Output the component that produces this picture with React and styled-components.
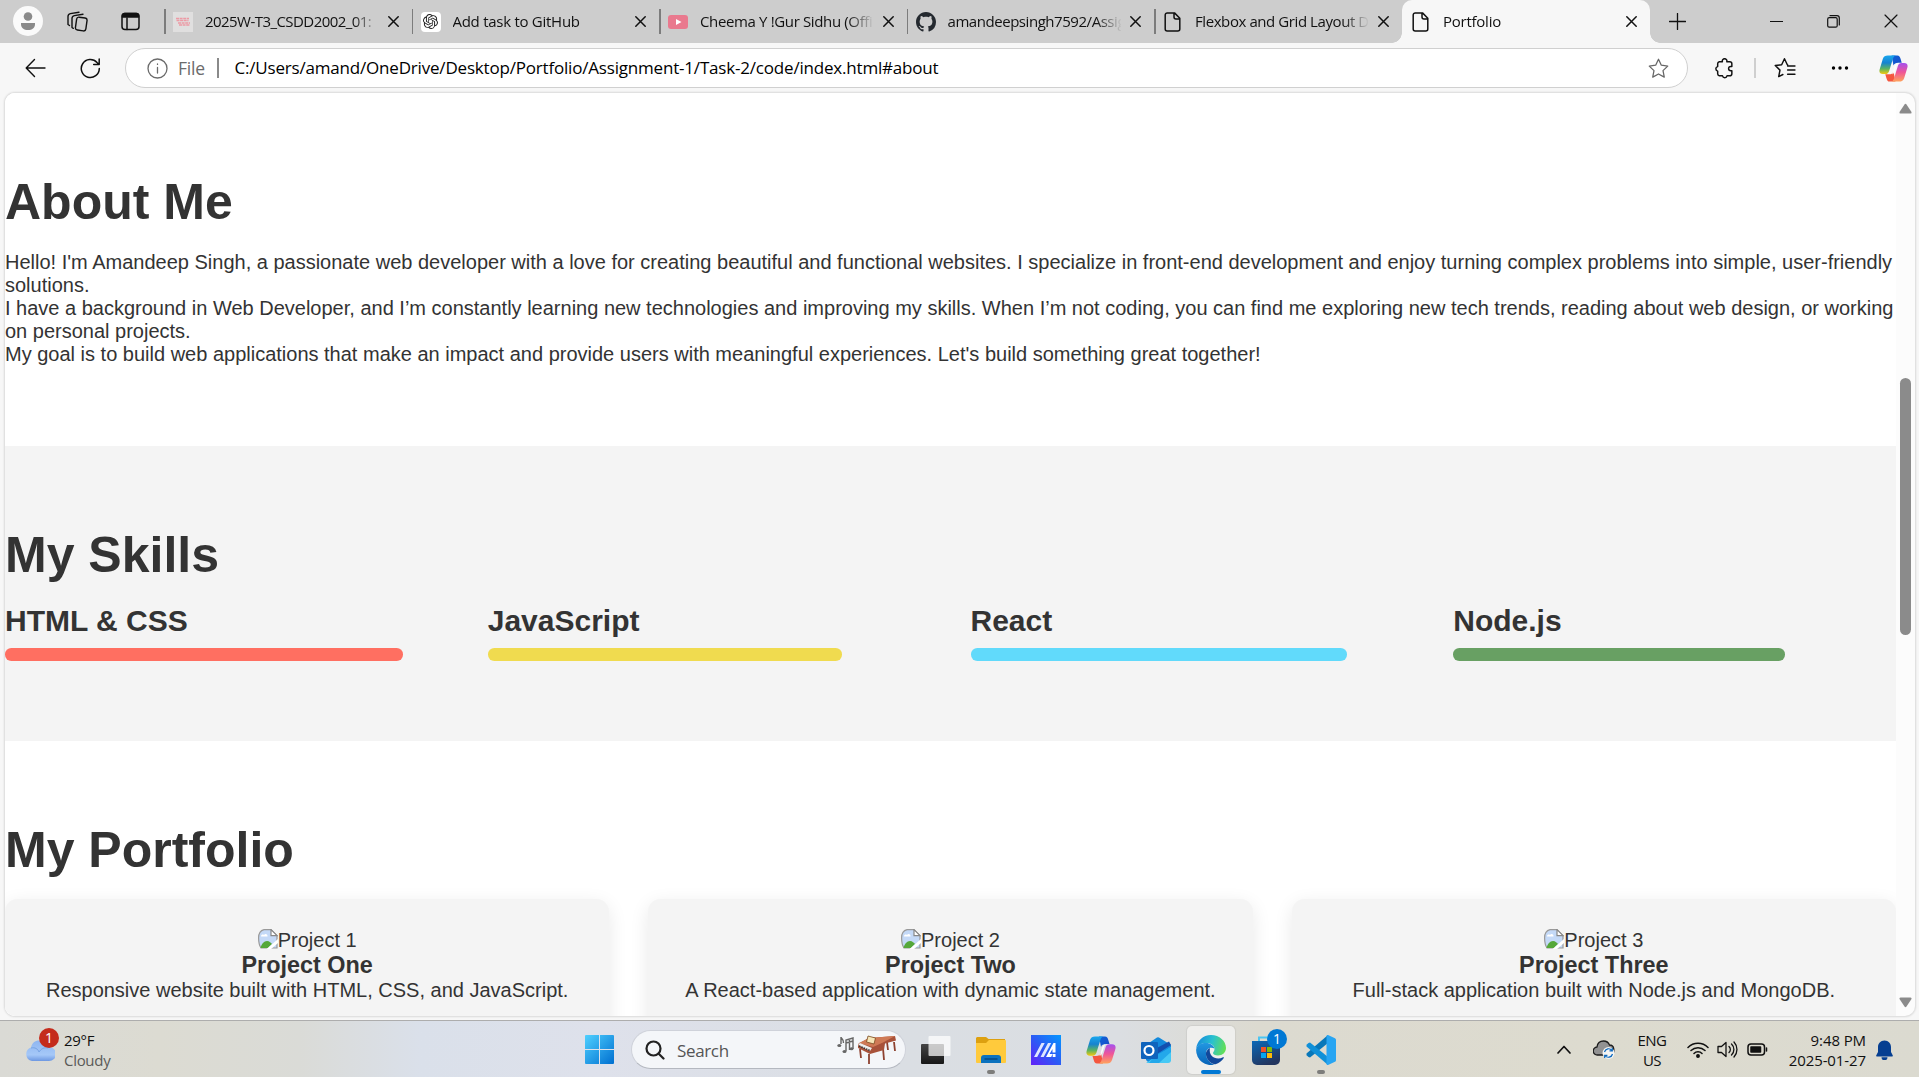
import React from 'react';
import styled, { createGlobalStyle } from 'styled-components';
import { SiOpenai } from 'react-icons/si';

const Global = createGlobalStyle`
  * { box-sizing: border-box; margin: 0; padding: 0; }
  body { background: #f7f7f7; overflow: hidden; }
  svg { display: block; flex: none; }
`;
const ui = `"Open Sans", "Noto Sans", sans-serif`;

const Screen = styled.div`
  width: 1919px; height: 1077px; display: flex; flex-direction: column;
  background: #f7f7f7; overflow: hidden; font-family: ${ui}; color: #111;
`;

/* ---------- tab strip ---------- */
const TabStrip = styled.div`
  height: 43px; flex: none; display: flex; background: #cdcdcd;
`;
const StripTools = styled.div`
  width: 164px; display: flex; align-items: center; padding: 0 0 1px 13px;
`;
const Avatar = styled.div`
  width: 30px; height: 30px; border-radius: 50%; background: #fafafa;
  display: grid; place-items: center; margin-right: 24px;
`;
const TabBox = styled.div`
  width: ${p => p.$w || 247.5}px; height: 43px; display: flex; align-items: center; position: relative;
  padding-left: ${p => (p.$active ? 9 : 8)}px;
  margin-left: ${p => (p.$active ? 0.5 : 0)}px;
  background: ${p => (p.$active ? '#f7f7f7' : 'transparent')};
  border-radius: ${p => (p.$active ? '10px 10px 0 0' : '0')};
  &::before {
    content: ''; display: ${p => (p.$active ? 'none' : 'block')};
    width: 1.5px; height: 25px; background: #7c7c7c; margin-left: -8px; margin-right: 7.5px;
  }
`;
const Foot = styled.i`
  position: absolute; bottom: 0; width: 10px; height: 10px;
  ${p => (p.$right ? 'right: -10px;' : 'left: -10px;')}
  background: radial-gradient(circle at ${p => (p.$right ? '100%' : '0')} 0, transparent 9.5px, #f7f7f7 10px);
`;
const TabTitle = styled.span`
  width: 173px; margin-left: 12px; font-size: 15px; letter-spacing: ${p => p.$ls || 0}px; line-height: 22px;
  white-space: nowrap; padding-bottom: 2px;
  mask-image: linear-gradient(90deg, #000 148px, transparent 174px);
`;
const TabClose = styled.span`width: 24px; display: grid; place-items: center; margin-left: 3px;`;
const NewTab = styled.span`width: 54px; display: grid; place-items: center; padding-bottom: 1px;`;
const WindowButtons = styled.div`
  margin-left: auto; margin-right: -1px; display: flex; align-items: center; padding-bottom: 1px;
  span { width: 57.5px; display: grid; place-items: center; }
`;

/* ---------- toolbar ---------- */
const Toolbar = styled.div`
  height: 50px; flex: none; display: flex; align-items: center; padding-left: 24.5px;
`;
const Address = styled.div`
  width: 1563px; height: 40px; margin-left: 24.5px; border: 1.5px solid #d0d0d0; border-radius: 20px;
  background: #fff; display: flex; align-items: center; padding: 0 18px 0 21px;
`;
const FileLabel = styled.span`font-size: 17.5px; color: #6b6b6b; margin-left: 10px; width: 34px; letter-spacing: -.2px; padding-bottom: 1px;`;
const Divider = styled.i`width: 1.5px; height: 20px; flex: none; background: ${p => p.$c || '#8a8a8a'};`;
const Url = styled.span`
  font-size: 17px; margin-left: 16px; padding-bottom: 2px; letter-spacing: -0.19px; color: #000; flex: 1; white-space: nowrap;
`;
const ToolIcons = styled.div`flex: 1; display: flex; align-items: center; padding-left: 26px;`;

/* ---------- page ---------- */
const Viewport = styled.div`
  width: 1910px; height: 923px; margin-left: 5px; flex: none; display: flex; overflow: hidden;
  border-radius: 10px; background: #fcfcfc; box-shadow: 0 0 2px 1px rgba(0,0,0,.12);
`;
const Page = styled.main`
  width: 1891px; background: #fff; color: #333; overflow: hidden;
  font: 20px/23px "Liberation Sans", Arial, sans-serif;
`;
const Section = styled.section`
  padding: 80px 0; background: ${p => (p.$tinted ? '#f4f4f4' : '#fff')};
`;
const Heading = styled.h1`font-size: 50px; line-height: 57.5px; padding-top: 1px; margin-bottom: 19px; font-weight: 700;`;
const SkillGrid = styled.div`display: grid; grid-template-columns: repeat(4, 1fr); gap: 40px;`;
const SkillName = styled.h3`font-size: 30px; line-height: 35px; margin-bottom: 10px;`;
const Bar = styled.div`height: 12.5px; border-radius: 6.25px; width: ${p => p.$w}%; background: ${p => p.$c};`;
const CardGrid = styled.div`display: grid; grid-template-columns: repeat(3, 1fr); gap: 39px; padding-top: .5px;`;
const Card = styled.article`
  padding: 30.5px; height: 200px; border-radius: 12.5px; background: #f4f4f4; text-align: center;
  box-shadow: 0 5px 19px rgba(0,0,0,.09);
`;
const ImageLine = styled.div`display: flex; justify-content: center; height: 23px;`;
const CardTitle = styled.h3`font-size: 23.4px; line-height: 26.5px;`;
const ScrollTrack = styled.div`
  width: 19px; display: flex; flex-direction: column; align-items: center; padding: 10px 0 8px;
`;
const Thumb = styled.div`width: 11px; height: 257px; border-radius: 6px; background: #8b8b8b; margin: 264px 0 auto;`;

/* ---------- taskbar ---------- */
const Taskbar = styled.footer`
  height: 57px; flex: none; margin-top: 4px; border-top: 1px solid #adadad; display: flex; align-items: center; padding-top: 1px;
  background: linear-gradient(90deg, #dadad5 0, #dcdbd2 160px, #dadbd7 300px, #dae0ea 420px, #dee1eb 600px, #dadee3 900px, #dbdee2 1120px, #dcdad0 1260px, #dddbcf 1600px, #dbdad0 100%);
`;
const Weather = styled.div`display: flex; width: 585px; padding-left: 24px; align-items: center;`;
const IconHolder = styled.div`position: relative; width: 32px; height: 32px; display: grid; place-items: center;`;
const Badge = styled.b`
  position: absolute; top: ${p => p.$top}px; right: ${p => p.$right}px; width: 20px; height: 20px; border-radius: 50%;
  background: ${p => p.$c}; color: #fff; font-size: 14px; font-weight: 400; line-height: 20px; text-align: center;
`;
const Lines = styled.div`
  font-size: 15px; line-height: 20px; letter-spacing: ${p => p.$ls || 0}px; white-space: nowrap;
  text-align: ${p => p.$align || 'left'}; width: ${p => p.$w || 'auto'};
  small { display: block; font-size: inherit; color: ${p => p.$second || 'inherit'}; }
`;
const SearchBox = styled.div`
  width: 275px; height: 39px; margin: 0 6px 0 17px; border-radius: 20px; background: #f4f6f9; border: 1px solid #cfd2da;
  border-bottom-color: #b4b8c0; display: flex; align-items: center; padding: 0 8px 0 13px;
  span { font-size: 17px; color: #555; margin-left: 12px; flex: 1; letter-spacing: -.35px; padding-top: 1px; }
`;
const AppIcon = styled.div`
  width: 48px; height: 48px; margin-right: 7px; border-radius: 5px; position: relative; display: grid; place-items: center;
  background: ${p => (p.$active ? '#efefed' : 'transparent')};
  box-shadow: ${p => (p.$active ? '0 0 1px 1px rgba(0,0,0,.06)' : 'none')};
`;
const Indicator = styled.i`
  position: absolute; bottom: 0; left: ${p => (48 - p.$w) / 2}px; width: ${p => p.$w}px; height: 4px; border-radius: 2px; background: ${p => p.$c};
`;
const Tray = styled.div`
  margin-left: auto; display: flex; align-items: center; padding-right: 26px;
`;
const Gap = styled.i`width: ${p => p.$w}px; flex: none;`;

/* ---------- drawings ---------- */
const Line = ({ w = 20, h = w, vb = `0 0 ${w} ${h}`, s = 1.5, c = '#111', children }) => (
  <svg width={w} height={h} viewBox={vb} fill="none" stroke={c} strokeWidth={s} strokeLinecap="round" strokeLinejoin="round">{children}</svg>
);
const Cross = ({ size = 11, s = 1.5 }) => <Line w={size} vb="0 0 11 11" s={s}><path d="M.8.8l9.4 9.4M10.2.8L.8 10.2" /></Line>;
const FileIcon = () => <Line w={20} s={1.5}><path d="M4.200.9h7.300l5.300 5.300V17a2 2 0 0 1-2 2H4.200a2 2 0 0 1-2-2V2.900a2 2 0 0 1 2-2zM11 1v4a2 2 0 0 0 2 2h3.700" /></Line>;
const CollegeIcon = () => (
  <svg width="20" height="20"><rect width="20" height="20" fill="#e0dfdf" /><path d="M3 6.500h13M3.500 8.500h12M5 11h12M6 13h11" stroke="#ec9aa5" strokeWidth="1.500" strokeDasharray="3 .6" /></svg>
);
const WhiteTile = styled.span`
  width: 20px; height: 20px; flex: none; border-radius: 4px; background: #fff; color: #222; display: grid; place-items: center;
`;
const GptIcon = () => <WhiteTile><SiOpenai size={15} /></WhiteTile>;
const VideoIcon = () => <svg width="20" height="20"><rect y="3" width="20" height="14" rx="3" fill="#e9798e" /><path d="M8 7l5.500 3L8 13z" fill="#fff" /></svg>;
const GitHubIcon = () => <svg width="20" height="20" viewBox="0 0 16 16"><path fill="#24292f" d="M8 0C3.580 0 0 3.580 0 8c0 3.540 2.290 6.530 5.470 7.590.4.070.55-.17.55-.38 0-.19-.01-.82-.01-1.490-2.010.37-2.530-.49-2.690-.94-.09-.23-.48-.94-.82-1.130-.28-.15-.68-.52-.01-.53.63-.01 1.080.58 1.230.82.72 1.210 1.870.87 2.330.66.07-.52.28-.87.51-1.070-1.780-.2-3.640-.89-3.640-3.950 0-.87.31-1.590.82-2.150-.08-.2-.36-1.020.08-2.120 0 0 .67-.21 2.200.82.64-.18 1.320-.27 2-.27s1.360.09 2 .27c1.530-1.040 2.200-.82 2.200-.82.44 1.100.16 1.920.08 2.120.51.56.82 1.270.82 2.150 0 3.070-1.870 3.750-3.650 3.950.29.25.54.73.54 1.480 0 1.070-.01 1.930-.01 2.200 0 .21.15.46.55.38A8 8 0 0 0 16 8c0-4.420-3.580-8-8-8z" /></svg>;

const Copilot = ({ size = 30 }) => (
  <svg width={size} height={size} viewBox="0 0 30 30">
    <defs>
      <linearGradient id="cpA" x1="0" y1="0" x2="0" y2="1"><stop offset="0" stopColor="#19a7ee" /><stop offset=".4" stopColor="#1683d0" /><stop offset=".72" stopColor="#5cb460" /><stop offset="1" stopColor="#f4c90e" /></linearGradient>
      <linearGradient id="cpB" x1="0" y1="0" x2="0" y2="1"><stop offset="0" stopColor="#a550ee" /><stop offset=".5" stopColor="#ef5698" /><stop offset="1" stopColor="#ffa35c" /></linearGradient>
      <linearGradient id="cpC" x1="0" y1="0" x2="1" y2="1"><stop offset="0" stopColor="#0d63d8" /><stop offset="1" stopColor="#1b4cc7" /></linearGradient>
    </defs>
    <path d="M13 1.500h6c2 0 2.700 1.500 3.300 3.500L23.500 9H20c-2.800 0-4.200.8-5 3z" fill="url(#cpC)" />
    <path d="M17 28.500h-6c-2 0-2.700-1.500-3.300-3.500L6.500 21H10c2.800 0 4.200-.8 5-3z" fill="#f4573f" />
    <path d="M9 1.500h9c-2 0-3 1.500-3.600 3.500l-3.900 12.500c-.6 2-1.800 3.200-3.800 3.200H4c-3 0-4.200-2-3.300-5L4 5C4.800 2.500 6.500 1.500 9 1.500z" fill="url(#cpA)" />
    <path d="M21 28.500h-9c2 0 3-1.500 3.600-3.500l3.900-12.500c.6-2 1.800-3.200 3.800-3.200H26c3 0 4.200 2 3.300 5L26 25c-.8 2.500-2.500 3.500-5 3.500z" fill="url(#cpB)" />
    <path d="M16 13c.6-2 1.700-3.200 3.500-3.700-.7.700-1.100 1.700-1.500 3l-1.600 5.200c-.6 2-1.400 3-3 3.400.5-.7.800-1.500 1.100-2.500z" fill="#fff" opacity=".85" />
  </svg>
);
const BrokenImage = () => (
  <svg width="20" height="20" viewBox="0 0 20 20">
    <path d="M6 .7h7l6 6V19H3C1 16 .6 13 .6 9S2.500 1.500 6 .7z" fill="#c4d9f7" stroke="#999" strokeWidth="1.200" />
    <path d="M13 .7v6h6z" fill="#fff" stroke="#888" strokeWidth="1.200" />
    <path d="M3 7.500c0-2 2-2.500 3-1.500 1-2 4-1 3.500 1.500z" fill="#fff" />
    <path d="M2.500 19c1-4 3.500-7 6.500-7 2.500 0 4 2 5 3l-4 4z" fill="#55a83a" />
    <path d="M8 20.500L20 10v4L12.500 20.500z" fill="#fff" />
  </svg>
);
const WindowsLogo = () => (
  <svg width="29" height="29" viewBox="0 0 29 29"><defs><linearGradient id="win" x1="0" y1="0" x2="1" y2="1"><stop stopColor="#4fd0ff" /><stop offset="1" stopColor="#006fd0" /></linearGradient></defs>
    <path d="M1 0h13v14H0V1a1 1 0 0 1 1-1zM15 0h13a1 1 0 0 1 1 1v13H15zM0 15h14v14H1a1 1 0 0 1-1-1zM15 15h14v13a1 1 0 0 1-1 1H15z" fill="url(#win)" /></svg>
);
const Piano = () => (
  <svg width="60" height="30" viewBox="0 0 60 30">
    <g fill="none" stroke="#666" strokeWidth="1.400"><path d="M4 9V2c0 2 3 2 2.500 6M9 16V5l7-2v11M9 8l7-2M12.500 4v11" /></g>
    <g fill="#666"><ellipse cx="2.300" cy="10.500" rx="2" ry="1.600" /><ellipse cx="7.500" cy="16.500" rx="2" ry="1.500" /><ellipse cx="14.500" cy="13.700" rx="2" ry="1.500" /></g>
    <path d="M23 14l1 9M32 19v10M46 13l1 12M57 7l1 9M50 7l1 8" stroke="#8e4230" strokeWidth="1.800" />
    <path d="M21 9L32 3 58 1l1 4.500-11 3-1 6.500-14 4-12-6z" fill="#a8523a" /><path d="M22 8L32 3l26-2L46 7.500l-10 4.500z" fill="#cf7a56" />
    <path d="M21 10l12 6 2-3-12-5z" fill="#eee" /><path d="M22 11l11 4.500" stroke="#333" strokeWidth="1.500" strokeDasharray="1.500 1" />
    <path d="M31 1l7.500 2-1.500 6-7.500-2z" fill="#f6e6b8" stroke="#7a4a20" strokeWidth=".8" />
  </svg>
);
const TaskView = () => (
  <svg width="30" height="28"><defs><linearGradient id="tv" x2="0" y2="1"><stop stopColor="#444" /><stop offset="1" stopColor="#171717" /></linearGradient></defs>
    <rect y="8" width="23" height="20" rx="1" fill="url(#tv)" /><rect x="7.500" width="22" height="20" rx="1" fill="#fff" opacity=".72" /></svg>
);
const Folder = () => (
  <svg width="30" height="28" viewBox="0 0 30 28"><path d="M1 1h9l2.500 2H29v10H0V2z" fill="#dda010" /><path d="M0 7h10l3-3h16a1 1 0 0 1 1 1v21a1 1 0 0 1-1 1H1a1 1 0 0 1-1-1z" fill="#ffca3c" />
    <path d="M5 27v-5a3 3 0 0 1 3-3h14a3 3 0 0 1 3 3v5z" fill="#0c72be" /><path d="M8.500 23h13" stroke="#054a83" strokeWidth="1.500" /></svg>
);
const MyAsus = () => (
  <svg width="30" height="30"><defs><linearGradient id="asus" x1="0" y1="1" x2="1" y2="0"><stop stopColor="#6320f8" /><stop offset=".5" stopColor="#2b5cf5" /><stop offset="1" stopColor="#0497ff" /></linearGradient></defs>
    <rect width="30" height="30" fill="url(#asus)" />
    <path d="M3 22L10.500 8h3.200L6.200 22zM9.500 22L17 8h3.200L12.700 22z" fill="#dfe6ff" />
    <path d="M15 22L22.500 8H24.500v9.500h-3v-3.500L18.500 19h3l-1.300 3zM21.700 19h2.800v3h-2.800z" fill="#fff" /></svg>
);
const Outlook = () => (
  <svg width="30" height="28" viewBox="0 0 30 28"><path d="M5 9L16 1.500Q17 1 18 1.500L30 9v15l-4 3H8l-3-3z" fill="#1389dc" /><path d="M14 13L28 5.500 30 9 16 18z" fill="#134faf" />
    <path d="M5 27L30 11v13a3 3 0 0 1-3 3z" fill="#46c9f5" /><path d="M14 20l16-9v5L18 27H8z" fill="#23a8ea" /><rect y="6" width="17" height="17" rx="1" fill="#0f64bd" /><circle cx="8" cy="14.500" r="4.500" fill="none" stroke="#fff" strokeWidth="2.200" /></svg>
);
const Edge = () => (
  <svg width="30" height="30" viewBox="0 0 30 30"><defs>
    <linearGradient id="edA" x1="0" y1=".4" x2="1" y2=".6"><stop stopColor="#178bdc" /><stop offset=".5" stopColor="#29c1cf" /><stop offset="1" stopColor="#65e052" /></linearGradient>
    <linearGradient id="edB" x1="0" y1="0" x2="0" y2="1"><stop stopColor="#2297e1" /><stop offset="1" stopColor="#0763b8" /></linearGradient></defs>
    <path d="M.2 14C.8 6 7 0 15 0c8.500 0 15 6 15 13 0 4.500-3.500 7.500-8 7.500-3 0-5-1-5-2.500 0-1 1.500-1.800 1.500-4C18.500 10.500 15 8 10.500 8 5 8 1 11 .2 14z" fill="url(#edA)" />
    <path d="M.1 15C.5 10.500 4.500 8 10 8c4.500 0 8 2.500 8.500 5.500-5-2-8.500 1-8.500 5 0 6 5 10.500 9 11A15 15 0 0 1 .1 15z" fill="url(#edB)" />
    <path d="M14 13c-3 1.500-4.500 4-4 7 .8 5 5 9 9.500 9.200 3.500-1 6.500-3.200 8.300-6.200.4-.7-.2-1-.8-.7C21 25.500 12 22 14 13z" fill="#11489b" />
  </svg>
);
const Store = () => (
  <svg width="30" height="30" viewBox="0 0 30 30"><path d="M8 7V2.500h14V7" fill="none" stroke="#4bc5f2" strokeWidth="2" /><defs><linearGradient id="st" x2=".5" y2="1"><stop stopColor="#0b69b8" /><stop offset="1" stopColor="#23365f" /></linearGradient></defs>
    <path d="M1 6h28v19a5 5 0 0 1-5 5H6a5 5 0 0 1-5-5z" fill="url(#st)" /><path d="M10 12h5v5h-5z" fill="#f35325" /><path d="M16 12h5v5h-5z" fill="#81bc06" /><path d="M10 18h5v5h-5z" fill="#05a6f0" /><path d="M16 18h5v5h-5z" fill="#ffba08" /></svg>
);
const VsCode = () => (
  <svg width="30" height="30" viewBox="0 0 30 30"><path d="M22 0v8L4 22.500 2.500 22 .5 20.200v-1.700z" fill="#0877b9" /><path d="M22 30v-8L4 7.500 2.500 8 .5 9.800v1.700z" fill="#1090d8" />
    <path d="M22 0l7 3.200a2 2 0 0 1 1 1.800v20a2 2 0 0 1-1 1.800L22 30c-.8.300-1.500-.5-1.500-1V1c0-.5.700-1.300 1.500-1z" fill="#28a5f2" /></svg>
);
const WeatherCloud = () => (
  <svg width="30" height="22" viewBox="0 0 30 22"><defs><linearGradient id="wc" x2="0" y2="1"><stop stopColor="#8fb6f0" /><stop offset=".7" stopColor="#a5c8f8" /><stop offset="1" stopColor="#6d98e2" /></linearGradient></defs>
    <path d="M7 22a7 7 0 0 1-1-13.500C7 4 10 1.500 14 1.500c4 0 7 2.500 7.500 6.500H24a7 7 0 0 1 0 14z" fill="url(#wc)" /><path d="M6 9c4-1 7 1 8 4 2-3 5-5 9-4" fill="none" stroke="#79a4e4" /></svg>
);
const SyncCloud = () => (
  <svg width="22" height="19" viewBox="0 0 22 19"><path d="M4.500 15a4 4 0 0 1-.5-8C4.500 3 7 1 10.500 1c3 0 5 1.500 6 4 2.500 0 4 1.500 4.300 4v3L14 15z" fill="#929292" stroke="#1d1d1d" strokeWidth="1.300" />
    <circle cx="15.500" cy="13" r="6" fill="#f5f5f3" /><path d="M11.500 12a4.200 4.200 0 0 1 7.500-1.500m.5 3.500a4.200 4.200 0 0 1-7.500 1.500M19.300 8v2.800h-2.800M11.700 18v-2.700h2.700" fill="none" stroke="#0a67bd" strokeWidth="1.200" /></svg>
);

const starPath = 'M10 1.200l2.700 5.700 6.100.8-4.500 4.300 1.200 6.200-5.500-3-5.500 3 1.200-6.200L1.200 7.700l6.100-.8z';

const tabs = [
  { title: '2025W-T3_CSDD2002_01:', icon: <CollegeIcon />, ls: -0.55 },
  { title: 'Add task to GitHub', icon: <GptIcon />, ls: -0.27 },
  { title: 'Cheema Y !Gur Sidhu (Offi', icon: <VideoIcon />, ls: -0.36 },
  { title: 'amandeepsingh7592/Assig', icon: <GitHubIcon />, ls: -0.45 },
  { title: 'Flexbox and Grid Layout D', icon: <FileIcon />, ls: -0.42 },
];
const skills = [['HTML & CSS', 90, '#ff6f61'], ['JavaScript', 80, '#f0db4f'], ['React', 85, '#61dafb'], ['Node.js', 75, '#68a063']];
const projects = [
  ['Project 1', 'Project One', 'Responsive website built with HTML, CSS, and JavaScript.'],
  ['Project 2', 'Project Two', 'A React-based application with dynamic state management.'],
  ['Project 3', 'Project Three', 'Full-stack application built with Node.js and MongoDB.'],
];
const apps = [
  { icon: <TaskView /> }, { icon: <Folder />, mark: [8, '#7d7d7b'] }, { icon: <MyAsus /> }, { icon: <Copilot /> }, { icon: <Outlook /> },
  { icon: <Edge />, mark: [20, '#0078d4'], active: true }, { icon: <Store />, badge: true }, { icon: <VsCode />, mark: [8, '#7d7d7b'] },
];

export default function App() {
  return (
    <Screen>
      <Global />
      <TabStrip>
        <StripTools>
          <Avatar><svg width="16" height="18"><circle cx="8" cy="4.500" r="4.300" fill="#8a8a8a" /><path d="M1 11h14v1c0 4-3 6-7 6s-7-2-7-6z" fill="#8a8a8a" /></svg></Avatar>
          <Line w={21} s={1.4}>
            <rect x="9" y="6.500" width="10.500" height="13" rx="2.300" transform="rotate(8 14 13)" />
            <path d="M6.300 17.300L5 16.500V7.500a3 3 0 0 1 2.300-2.900L16 3.200M2.500 14.500L1 13.500V5.500a3 3 0 0 1 2.300-2.900L12 1.200" />
          </Line>
          <Gap $w={33} />
          <Line w={19}><rect x="1" y="1.500" width="17" height="16" rx="3" /><path d="M1.500 5V3.500a2 2 0 0 1 2-2h12a2 2 0 0 1 2 2V5z" fill="#111" /><path d="M6 6v11.500" /></Line>
        </StripTools>
        {tabs.map(t => (
          <TabBox key={t.title}>{t.icon}<TabTitle $ls={t.ls}>{t.title}</TabTitle><TabClose><Cross /></TabClose></TabBox>
        ))}
        <TabBox $active $w={248}>
          <Foot /><Foot $right />
          <FileIcon /><TabTitle $ls={-0.25}>Portfolio</TabTitle><TabClose><Cross /></TabClose>
        </TabBox>
        <NewTab><Line w={17} s={1.3}><path d="M8.500.5v16M.5 8.500h16" /></Line></NewTab>
        <WindowButtons>
          <span><Line w={13} s={1.2}><path d="M0 6.500h13" /></Line></span>
          <span><Line w={13} s={1.2}><rect x=".7" y="2.700" width="9.500" height="9.500" rx="1.500" /><path d="M3 .7h7a2.300 2.300 0 0 1 2.300 2.300v7" /></Line></span>
          <span><Cross size={14} s={0.95} /></span>
        </WindowButtons>
      </TabStrip>

      <Toolbar>
        <Line w={21} s={1.4}><path d="M20 10H1.500M9.500 1.500L1.200 10 9.500 18.500" /></Line>
        <Gap $w={34} />
        <Line w={21} s={1.5}><path d="M19.300 10.500A9 9 0 1 1 17 4.500l1.800 1.800M19.200 1v5.500h-5.500" /></Line>
        <Address>
          <Line w={21} s={1.3} c="#6b6b6b"><circle cx="10.500" cy="10.500" r="9.500" /><path d="M10.500 9.500v5.500M10.500 6v.4" /></Line>
          <FileLabel>File</FileLabel><Gap $w={5} /><Divider />
          <Url>C:/Users/amand/OneDrive/Desktop/Portfolio/Assignment-1/Task-2/code/index.html#about</Url>
          <Line w={21} vb="0 0 20 20" s={1.2} c="#666"><path d={starPath} /></Line>
        </Address>
        <ToolIcons>
          <Line w={21} vb="0 0 20 20" s={1.4}><path d="M5 3.500h3a2.200 2.200 0 1 1 4.200 0H15a2 2 0 0 1 2 2V8h-1a2.100 2.100 0 0 0 0 4.200h1V15a2 2 0 0 1-2 2h-2.600a2.200 2.200 0 0 1-4.300 0H5a2 2 0 0 1-1.500-2v-2.500a2.200 2.200 0 0 1 0-4.300V5.500a2 2 0 0 1 1.500-2z" /></Line>
          <Gap $w={19} /><Divider $c="#cfcfcf" /><Gap $w={18} />
          <Line w={22} vb="0 0 21 20" s={1.4}><path d="M13 6.900h-.3L10 1.200 7.300 6.900l-6.100.8L5.700 12l-1.200 6.200 4-2M13 8h7M13 12h7M13 16h7" /></Line>
          <Gap $w={35} />
          <svg width="18" height="6"><circle cx="2.500" cy="3" r="1.700" /><circle cx="9" cy="3" r="1.700" /><circle cx="15.500" cy="3" r="1.700" /></svg>
          <Gap $w={30} />
          <Copilot size={29} />
        </ToolIcons>
      </Toolbar>

      <Viewport>
        <Page>
          <Section>
            <Heading>About Me</Heading>
            <p>Hello! I'm Amandeep Singh, a passionate web developer with a love for creating beautiful and functional websites. I specialize in front-end development and enjoy turning complex problems into simple, user-friendly solutions.</p>
            <p>I have a background in Web Developer, and I’m constantly learning new technologies and improving my skills. When I’m not coding, you can find me exploring new tech trends, reading about web design, or working on personal projects.</p>
            <p>My goal is to build web applications that make an impact and provide users with meaningful experiences. Let's build something great together!</p>
          </Section>
          <Section $tinted>
            <Heading>My Skills</Heading>
            <SkillGrid>
              {skills.map(([name, w, c]) => <div key={name}><SkillName>{name}</SkillName><Bar $w={w} $c={c} /></div>)}
            </SkillGrid>
          </Section>
          <Section>
            <Heading>My Portfolio</Heading>
            <CardGrid>
              {projects.map(([alt, name, text]) => (
                <Card key={name}><ImageLine><BrokenImage />{alt}</ImageLine><CardTitle>{name}</CardTitle><p>{text}</p></Card>
              ))}
            </CardGrid>
          </Section>
        </Page>
        <ScrollTrack>
          <svg width="13" height="11"><path d="M5.500 1.500Q6.500 0 7.500 1.500L12.500 9q.5 1.500-1 1.500h-10Q0 10.500.5 9z" fill="#8b8b8b" /></svg>
          <Thumb />
          <svg width="13" height="11"><path d="M5.500 9.500Q6.500 11 7.500 9.500L12.500 2Q13 .5 11.500.5h-10Q0 .5.5 2z" fill="#8b8b8b" /></svg>
        </ScrollTrack>
      </Viewport>

      <Taskbar>
        <Weather>
          <IconHolder><WeatherCloud /><Badge $top={-6} $right={-3} $c="#c42b1c">1</Badge></IconHolder>
          <Gap $w={8} />
          <Lines $ls={-0.3} $second="#5a5a58">29°F<small>Cloudy</small></Lines>
        </Weather>
        <WindowsLogo />
        <SearchBox>
          <Line w={20} s={2.2} c="#222"><circle cx="8.500" cy="8.500" r="7" /><path d="M13.500 13.500l5 5" /></Line>
          <span>Search</span>
          <Piano />
        </SearchBox>
        {apps.map((a, i) => (
          <AppIcon key={i} $active={a.active}>
            {a.icon}
            {a.badge && <Badge $top={3} $right={3} $c="#0078d4">1</Badge>}
            {a.mark && <Indicator $w={a.mark[0]} $c={a.mark[1]} />}
          </AppIcon>
        ))}
        <Tray>
          <Line w={14} h={9} s={1.7}><path d="M1 8l6-6.500L13 8" /></Line>
          <Gap $w={22} /><SyncCloud /><Gap $w={20} />
          <Lines $w="34px" $align="center" $ls={-0.5}>ENG<small>US</small></Lines>
          <Gap $w={18} />
          <Line w={22} h={17} s={1.5}><path d="M1 6.500a14 14 0 0 1 20 0M4 9.500a10 10 0 0 1 14 0M7 12.500a5.500 5.500 0 0 1 8 0" /><circle cx="11" cy="15" r="1.200" fill="#111" /></Line>
          <Gap $w={8} />
          <Line w={21} h={17} s={1.3}><path d="M1 5.500h3.500L9 1.500v14l-4.500-4H1zM12 5.500a4 4 0 0 1 0 6M14.500 3a7.500 7.500 0 0 1 0 11M17 1a11 11 0 0 1 0 15" /></Line>
          <Gap $w={9} />
          <Line w={21} h={13} s={1.5}><rect x="1" y="1" width="16.500" height="11" rx="3" /><rect x="4" y="4" width="9.500" height="5" fill="#111" /><path d="M19.500 5v3" /></Line>
          <Gap $w={10} />
          <Lines $w="88px" $align="right" $ls={-0.1}>9:48 PM<small>2025-01-27</small></Lines>
          <Gap $w={10} />
          <svg width="17" height="20" viewBox="0 0 17 20"><path d="M8.500.5c4 0 6.500 3 6.500 6.500v5l1.800 3.500c.2.500 0 1-.6 1H.8c-.6 0-.8-.5-.6-1L2 12V7C2 3.500 4.500.5 8.500.5zM5.500 17.300h6a3 3 0 0 1-6 0z" fill="#063f91" /></svg>
        </Tray>
      </Taskbar>
    </Screen>
  );
}
